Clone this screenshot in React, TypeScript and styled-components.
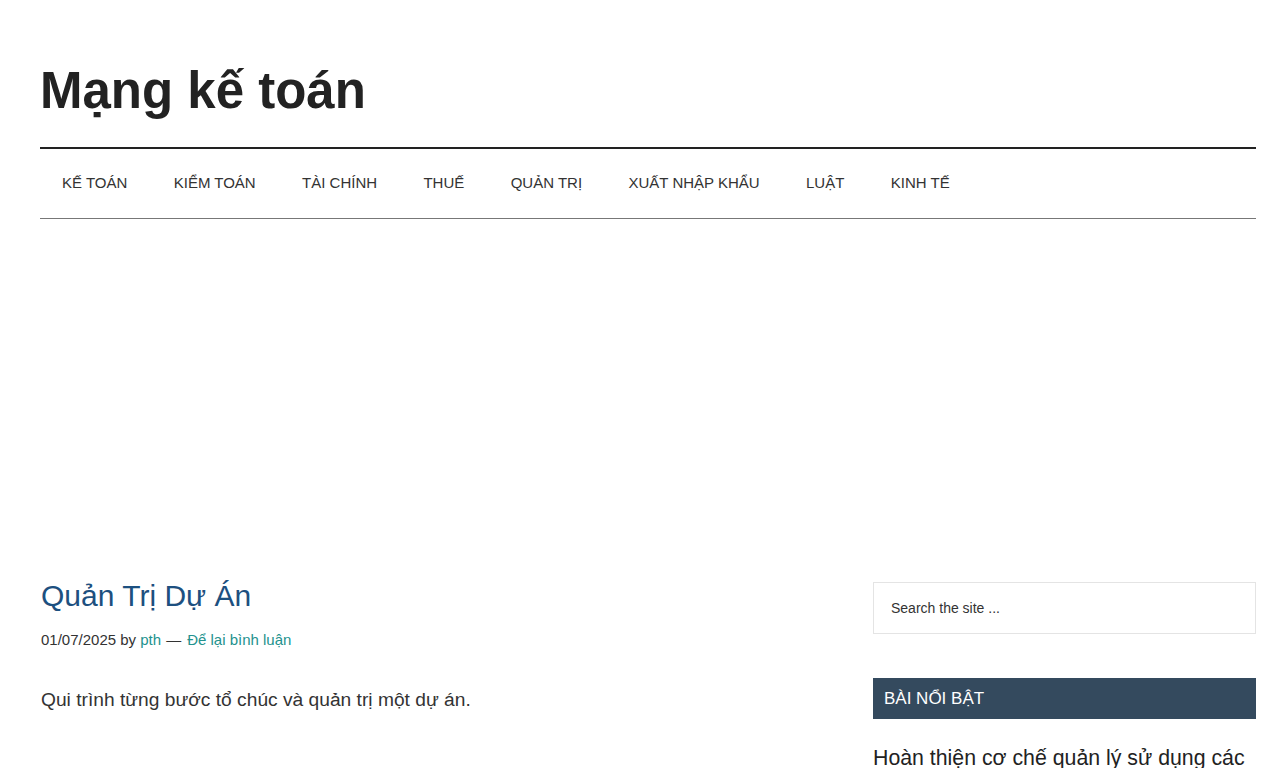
import React from "react";
import styled, { createGlobalStyle } from "styled-components";

const GlobalStyle = createGlobalStyle`
  html, body {
    margin: 0;
    padding: 0;
    background: #ffffff;
    color: #333333;
    font-family: "Liberation Sans", Arial, sans-serif;
  }
`;

const Site = styled.div`
  width: 1216px;
  margin: 0 auto;
  padding: 0 24px 0 40px;
  box-sizing: content-box;
`;

const Header = styled.header`
  padding: 60px 0 25px;
`;

const SiteTitle = styled.h1`
  margin: 0;
  font-size: 51px;
  line-height: 62px;
  font-weight: 700;
  color: #222222;
`;

const Nav = styled.nav`
  display: flex;
  border-top: 2px solid #222222;
  border-bottom: 1px solid #777777;
  height: 69px;
  box-sizing: content-box;
  align-items: center;
`;

const NavItem = styled.a`
  padding: 0 24.4px 2px 22px;
  font-size: 15px;
  color: #333333;
  text-transform: uppercase;
  text-decoration: none;
`;

const AdSpace = styled.div`
  height: 362px;
`;

const Columns = styled.div`
  display: grid;
  grid-template-columns: 800px 384px;
  justify-content: space-between;
`;

const Entry = styled.article`
  padding-left: 1px;
`;

const EntryTitle = styled.h2`
  margin: 0;
  font-size: 30px;
  line-height: 30px;
  font-weight: 400;
  color: #1d5080;
`;

const Meta = styled.p`
  margin: 19px 0 0;
  font-size: 15px;
  line-height: 20px;
  color: #333333;
`;

const MetaLink = styled.a`
  color: #23928e;
  text-decoration: none;
`;

const Dash = styled.span`
  margin: 0 6px 0 5px;
`;

const Excerpt = styled.p`
  margin: 38px 0 0;
  font-size: 19.2px;
  line-height: 24px;
  color: #333333;
`;

const Sidebar = styled.aside`
  padding: 1px 0 0 1px;
`;

const SearchBox = styled.div`
  height: 52px;
  border: 1px solid #e4e4e4;
  box-sizing: border-box;
  display: flex;
  align-items: center;
  padding: 0 17px;
  font-size: 14px;
  color: #333333;
`;

const WidgetTitle = styled.h4`
  margin: 44px 0 0;
  height: 41px;
  display: flex;
  align-items: center;
  padding: 0 11px;
  background: #344a5e;
  color: #ffffff;
  font-size: 17px;
  font-weight: 400;
  text-transform: uppercase;
`;

const FeaturedTitle = styled.h3`
  margin: 26px 0 0;
  font-size: 21.3px;
  line-height: 26px;
  font-weight: 400;
  color: #222222;
`;

const menu = ["Kế toán", "Kiểm toán", "Tài chính", "Thuế", "Quản trị", "Xuất nhập khẩu", "Luật", "Kinh tế"];

const App = () => (
  <>
    <GlobalStyle />
    <Site>
      <Header>
        <SiteTitle>Mạng kế toán</SiteTitle>
      </Header>
      <Nav>
        {menu.map((m) => (
          <NavItem key={m} href="#">{m}</NavItem>
        ))}
      </Nav>
      <AdSpace />
      <Columns>
        <Entry>
          <EntryTitle>Quản Trị Dự Án</EntryTitle>
          <Meta>
            01/07/2025 by <MetaLink href="#">pth</MetaLink>
            <Dash>—</Dash>
            <MetaLink href="#">Để lại bình luận</MetaLink>
          </Meta>
          <Excerpt>Qui trình từng bước tổ chúc và quản trị một dự án.</Excerpt>
        </Entry>
        <Sidebar>
          <SearchBox>Search the site ...</SearchBox>
          <WidgetTitle>Bài nổi bật</WidgetTitle>
          <FeaturedTitle>Hoàn thiện cơ chế quản lý sử dụng các</FeaturedTitle>
        </Sidebar>
      </Columns>
    </Site>
  </>
);

export default App;
